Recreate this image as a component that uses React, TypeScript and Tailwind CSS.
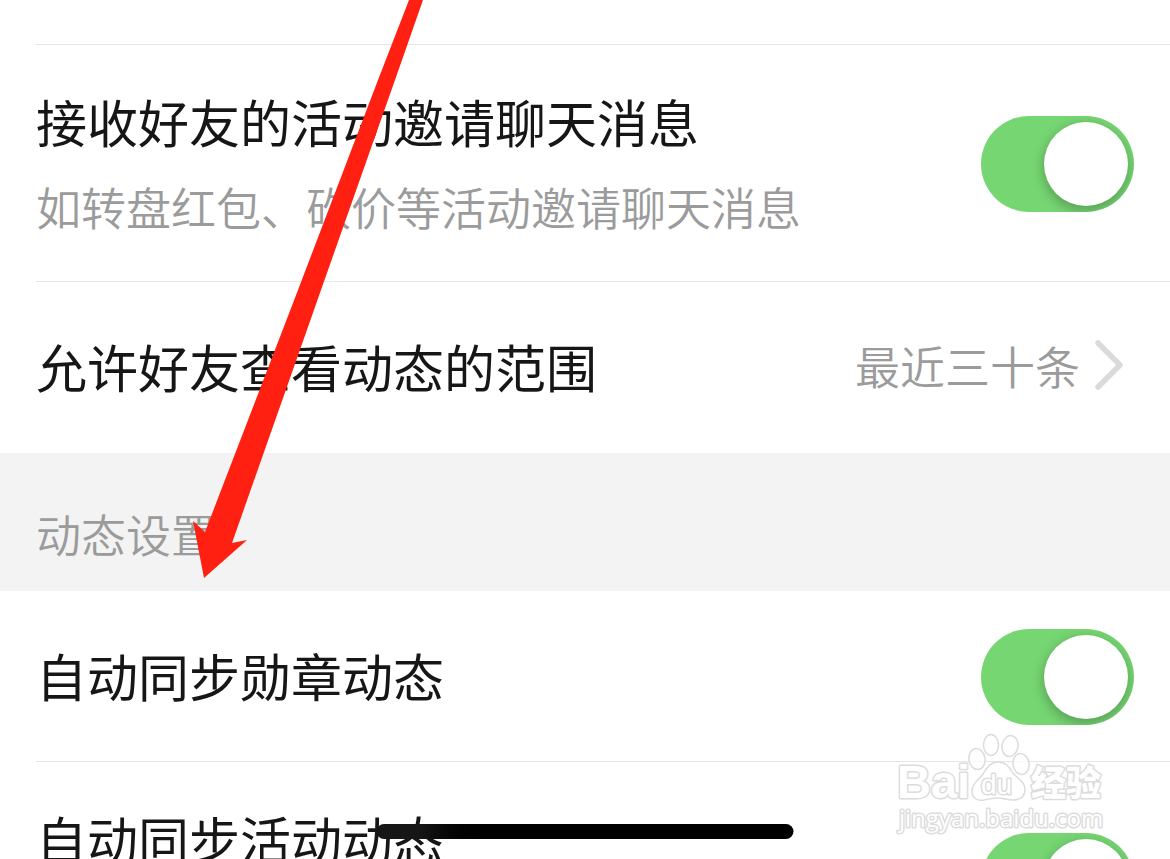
import { useId, useState } from "react";

// 设置页：好友互动 + 动态设置
const FONT = "font-['Noto_Sans_CJK_SC',sans-serif]";

function Divider() {
  return <div className="ml-9 h-px shrink-0 bg-[#e6e6e6]" />;
}

type SwitchRowProps = {
  title: string;
  desc?: string;
  tall?: boolean;
};

function SwitchRow({ title, desc, tall }: SwitchRowProps) {
  const id = useId();
  const [on, setOn] = useState(true);

  return (
    <div
      className={
        tall
          ? "flex shrink-0 items-center justify-between px-9 pt-12 pb-[46px]"
          : "flex shrink-0 items-center justify-between px-9 pt-[38px] pb-9"
      }
    >
      <div className={tall ? "flex min-h-[142px] flex-col gap-7" : "flex flex-col"}>
        <label htmlFor={id} className="pb-1 text-[51px] leading-[56px] text-[#161616]">
          {title}
        </label>
        {desc && <p className="text-[45px] leading-[52px] font-[350] text-[#9b9b9b]">{desc}</p>}
      </div>
      <input
        id={id}
        type="checkbox"
        role="switch"
        checked={on}
        onChange={(e) => setOn(e.target.checked)}
        className="flex h-24 w-[153px] shrink-0 cursor-pointer appearance-none items-center overflow-hidden rounded-full bg-[#d9d9d9] px-1.5 before:h-[84px] before:w-[84px] before:rounded-full before:bg-white before:shadow-[0_4px_12px_1px_rgba(0,0,0,0.25)] before:content-[''] checked:justify-end checked:bg-[#76d672]"
      />
    </div>
  );
}

function LinkRow({ title, value }: { title: string; value: string }) {
  return (
    <button
      type="button"
      className="flex shrink-0 items-center justify-between pt-14 pr-[46px] pb-[59px] pl-9 text-left"
    >
      <span className="text-[51px] leading-[56px] text-[#161616]">{title}</span>
      <span className="flex items-center gap-3.5">
        <span className="text-[45px] leading-[52px] font-[350] text-[#9b9b9b]">{value}</span>
        <svg width="30" height="54" viewBox="0 0 30 54" fill="none" aria-hidden="true">
          <path
            d="M4 4L26 26L4 48"
            stroke="#dadada"
            strokeWidth="5.5"
            strokeLinecap="round"
            strokeLinejoin="round"
          />
        </svg>
      </span>
    </button>
  );
}

// 右下角水印
function Watermark() {
  return (
    <svg
      className="pointer-events-none absolute right-[50px] bottom-[20px]"
      width="230"
      height="108"
      viewBox="0 0 230 108"
      fill="#fff"
      stroke="#dcdcdc"
      strokeWidth="1.5"
      strokeLinejoin="round"
      aria-hidden="true"
    >
      <g fillOpacity="0.7">
        <ellipse cx="87" cy="28" rx="8" ry="10.5" transform="rotate(-8 87 28)" />
        <ellipse cx="101" cy="14" rx="7.5" ry="10.5" />
        <ellipse cx="120" cy="15" rx="8" ry="10.5" transform="rotate(10 120 15)" />
        <ellipse cx="131" cy="33" rx="8" ry="10.5" transform="rotate(-8 131 33)" />
        <path d="M108 31C100 31 97 37 93 43C89 49 82 52 82 60C82 67 87 70 94 69C100 68 103 67 108 67C113 67 117 69 123 69C131 69 135 65 135 58C135 51 128 48 123 42C119 36 116 31 108 31Z" />
      </g>
      <g strokeWidth="3" paintOrder="stroke">
        <text
          x="7"
          y="67"
          fontSize="47"
          fontWeight="700"
          fontFamily="'Liberation Sans', sans-serif"
        >
          Bai
        </text>
        <text x="91" y="63" fontSize="28" fontFamily="'Liberation Sans', sans-serif">
          du
        </text>
        <text
          x="141"
          y="65"
          fontSize="35"
          fontWeight="900"
          fontFamily="'Noto Sans CJK SC', sans-serif"
        >
          经验
        </text>
        <text x="9" y="96" fontSize="24" fontFamily="'Open Sans', 'Noto Sans', sans-serif">
          jingyan.baidu.com
        </text>
      </g>
    </svg>
  );
}

function Arrow() {
  return (
    <svg
      className="pointer-events-none absolute top-0 left-0"
      width="430"
      height="580"
      viewBox="0 0 430 580"
      aria-hidden="true"
    >
      <path
        d="M409 0H423L395 80L321 290L232 543L247 540L204 578L193 521L205 532L298 290L378 80Z"
        fill="#ff2012"
      />
    </svg>
  );
}

export default function App() {
  return (
    <main className={`relative flex h-screen flex-col overflow-hidden bg-white ${FONT}`}>
      <div className="h-11 shrink-0" />
      <Divider />
      <SwitchRow title="接收好友的活动邀请聊天消息" desc="如转盘红包、砍价等活动邀请聊天消息" tall />
      <Divider />
      <LinkRow title="允许好友查看动态的范围" value="最近三十条" />
      <h2 className="shrink-0 bg-[#f3f3f3] px-9 pt-[55px] pb-[31px] text-[45px] leading-[52px] font-[350] text-[#9b9b9b]">
        动态设置
      </h2>
      <SwitchRow title="自动同步勋章动态" />
      <Divider />
      <SwitchRow title="自动同步活动动态" tall />

      <Watermark />
      <Arrow />
      {/* 底部横条 */}
      <div className="absolute bottom-5 left-1/2 h-[15px] w-[417px] -translate-x-1/2 rounded-full bg-linear-to-r from-[#161616] from-10% to-black to-30%" />
    </main>
  );
}
